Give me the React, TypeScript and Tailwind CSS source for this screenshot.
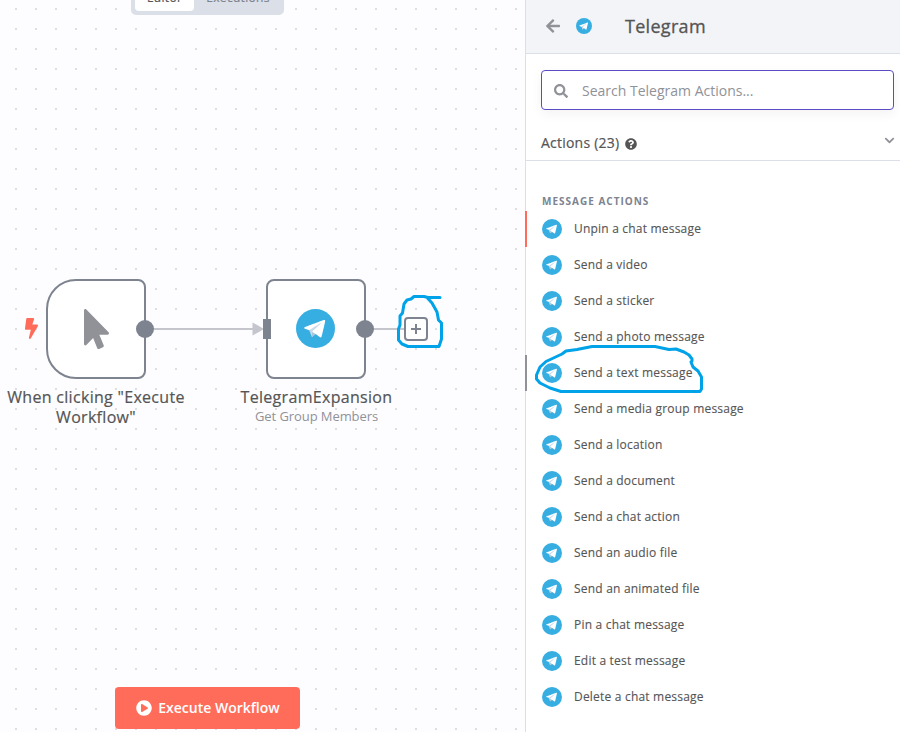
import React from "react";
import {
  FaArrowLeft,
  FaBolt,
  FaChevronDown,
  FaMousePointer,
  FaPlayCircle,
  FaQuestionCircle,
  FaSearch,
} from "react-icons/fa";

const actions: string[] = [
  "Unpin a chat message",
  "Send a video",
  "Send a sticker",
  "Send a photo message",
  "Send a text message",
  "Send a media group message",
  "Send a location",
  "Send a document",
  "Send a chat action",
  "Send an audio file",
  "Send an animated file",
  "Pin a chat message",
  "Edit a test message",
  "Delete a chat message",
];

function TelegramIcon({ className }: { className: string }) {
  return (
    <svg viewBox="0 0 64 64" className={className}>
      <circle cx="32" cy="32" r="32" fill="#37aee2" />
      <path fill="#c8daea" d="m21.661 34.338 3.797 10.508s.475.983.983.983 8.068-7.864 8.068-7.864l8.407-16.237-21.119 9.898z" />
      <path fill="#a9c6d8" d="m26.695 37.034-.729 7.746s-.305 2.373 2.068 0l4.644-4.203" />
      <path
        fill="#fff"
        d="m21.729 34.712-7.809-2.545s-.932-.378-.633-1.237c.062-.177.186-.328.559-.588 1.731-1.206 32.028-12.096 32.028-12.096s.856-.288 1.361-.097c.231.088.378.187.503.548.045.132.071.411.068.689-.003.201-.027.386-.045.678-.184 2.978-5.706 25.198-5.706 25.198s-.33 1.3-1.514 1.345c-.432.016-.956-.071-1.582-.61-2.323-1.998-10.352-7.394-12.126-8.58-.1-.066-.128-.154-.146-.241-.025-.125.108-.28.108-.28s13.98-12.427 14.352-13.731c.029-.101-.079-.151-.226-.107-.929.342-17.025 10.506-18.801 11.629-.104.066-.395.023-.395.023"
      />
    </svg>
  );
}

function Canvas() {
  return (
    <main className="relative h-full w-[525px] shrink-0 overflow-hidden bg-[#fdfdff]">
      <svg className="absolute inset-0 h-full w-full">
        <defs>
          <pattern id="grid" x="15" y="8" width="20" height="20" patternUnits="userSpaceOnUse">
            <rect width="2" height="2" fill="#dedee1" />
          </pattern>
        </defs>
        <rect width="525" height="732" fill="url(#grid)" />
        <path d="M145 329H254M365 329H405" stroke="#c4c5cd" strokeWidth="2" />
        <path d="M252.500 322.500L264 329L252.500 335.500Z" fill="#c4c5cd" />
      </svg>

      <div className="absolute -top-[15px] left-[131px] flex h-[30px] w-[153px] rounded-[5px] bg-[#dbdfe7] p-1 text-[12px] leading-[18px] tracking-[0.3px] [-webkit-text-stroke:0.2px_currentColor]">
        <div className="w-[59px] rounded-[4px] bg-white text-center text-[#555]">Editor</div>
        <div className="flex-1 pl-[2px] text-center text-[#7d838f]">Executions</div>
      </div>

      <FaBolt className="absolute top-[318px] left-[22px] h-[21px] w-[19px] text-[#ff6d5a]" />
      <div className="absolute top-[279px] left-[46px] flex h-[100px] w-[100px] items-center justify-center rounded-[8px] rounded-l-[30px] border-2 border-[#7d838f] bg-white">
        <FaMousePointer className="h-10 w-[25px] text-[#909298]" />
      </div>
      <div className="absolute top-[320px] left-[136px] size-[18px] rounded-full bg-[#7d838f]" />
      <div className="absolute top-[387px] left-0 w-[192px] text-center text-[16px] leading-5 tracking-[0.3px] text-[#555] [-webkit-text-stroke:0.2px_currentColor]">
        When clicking "Execute Workflow"
      </div>

      <div className="absolute top-[279px] left-[266px] flex h-[100px] w-[100px] items-center justify-center rounded-[8px] border-2 border-[#7d838f] bg-white">
        <TelegramIcon className="mr-px mb-px size-[39px]" />
      </div>
      <div className="absolute top-[319px] left-[263px] h-5 w-2 bg-[#7d838f]" />
      <div className="absolute top-[320px] left-[356px] size-[18px] rounded-full bg-[#7d838f]" />
      <div className="absolute top-[387px] left-[216px] w-[201px] text-center">
        <div className="text-[16px] leading-5 tracking-[0.31px] text-[#555] [-webkit-text-stroke:0.2px_currentColor]">
          TelegramExpansion
        </div>
        <div className="text-[13px] leading-[18px] tracking-[-0.08px] text-[#909298]">Get Group Members</div>
      </div>

      <svg className="absolute top-[317px] left-[404px] size-6" viewBox="0 0 24 24" fill="none" stroke="#7d838f" strokeWidth="2">
        <rect x="1" y="1" width="22" height="22" rx="3" fill="#fff" />
        <path d="M12 7V17M7 12H17" />
      </svg>

      <button className="absolute top-[687px] left-[115px] flex h-[42px] w-[185px] items-center justify-center gap-[6px] rounded-[4px] bg-[#ff6d5a] pl-px text-[14px] font-semibold text-white">
        <FaPlayCircle className="size-4" />
        <span className="mb-[2px]">Execute Workflow</span>
      </button>
    </main>
  );
}

function ActionRow({ label, index }: { label: string; index: number }) {
  const bar = index === 0 ? "border-[#ff6d5a]" : index === 4 ? "border-[#909298]" : "border-transparent";
  return (
    <li className={`-ml-px flex h-9 items-center gap-3 border-l-2 pl-[15px] ${bar}`}>
      <TelegramIcon className="size-5" />
      <span className="text-[12px] tracking-[0.2px] text-[#555] [-webkit-text-stroke:0.12px_currentColor]">{label}</span>
    </li>
  );
}

function ActionsPanel() {
  return (
    <aside className="flex h-full flex-1 flex-col border-l border-[#dbdfe7] bg-white">
      <header className="flex h-[54px] shrink-0 items-center border-b border-[#dbdfe7] bg-[#f2f4f8] pl-[19px]">
        <FaArrowLeft className="mb-[2px] size-4 text-[#909298]" />
        <TelegramIcon className="mb-px ml-[15px] size-4" />
        <h1 className="ml-[33px] text-[18px] tracking-[0.3px] text-[#555] [-webkit-text-stroke:0.3px_currentColor]">Telegram</h1>
      </header>
      <div className="mt-4 mr-[6px] ml-[15px] flex h-10 shrink-0 items-center rounded-[4px] border border-[#5a4cc2] pl-3 shadow-[0_4px_12px_rgba(68,28,23,0.05)]">
        <FaSearch className="mt-px size-[14px] text-[#909298]" />
        <span className="ml-[14px] text-[14px] text-[#909298]">Search Telegram Actions...</span>
      </div>
      <div className="mt-[15px] flex h-9 shrink-0 items-center border-b border-[#dbdfe7] pr-[5px] pl-[15px]">
        <span className="text-[14px] tracking-[0.22px] text-[#555] [-webkit-text-stroke:0.2px_currentColor]">Actions (23)</span>
        <FaQuestionCircle className="mt-[3px] ml-[6px] size-3 text-[#555]" />
        <FaChevronDown className="mb-[5px] ml-auto size-[11px] text-[#909298]" />
      </div>
      <h2 className="mt-8 mb-[2px] pl-4 text-[10px] leading-4 font-bold tracking-[1px] text-[#7d838f]">MESSAGE ACTIONS</h2>
      <ul>
        {actions.map((label, index) => (
          <ActionRow key={label} label={label} index={index} />
        ))}
      </ul>
    </aside>
  );
}

function PenMarks() {
  return (
    <svg
      className="pointer-events-none absolute inset-0 h-full w-full"
      viewBox="0 0 900 732"
      fill="none"
      stroke="#00a2e8"
      strokeWidth="3"
      strokeLinecap="round"
      strokeLinejoin="round"
    >
      <path d="M440 297.500H428L424 296.500H414L411 299L407 300L404 304L402.500 313L400 316V325L398.500 329V340L402 344L408 346.500H439L441.500 339V323L438.500 320L437 312L432 303L427 297.500" />
      <path d="M692 361V359L689 355L684 352L676 349L669 349.500L655 346.500H592L577 349.500L566 351L562 354L546 361.500L540 367L536.500 375V379L540 383L550 388L561 391.500H700L701.500 389V377L698 371L693 367L691 362" />
    </svg>
  );
}

export default function App() {
  return (
    <div className="relative flex h-[732px] w-[900px] overflow-hidden font-['Open_Sans','Noto_Sans',sans-serif]">
      <Canvas />
      <ActionsPanel />
      <PenMarks />
    </div>
  );
}
